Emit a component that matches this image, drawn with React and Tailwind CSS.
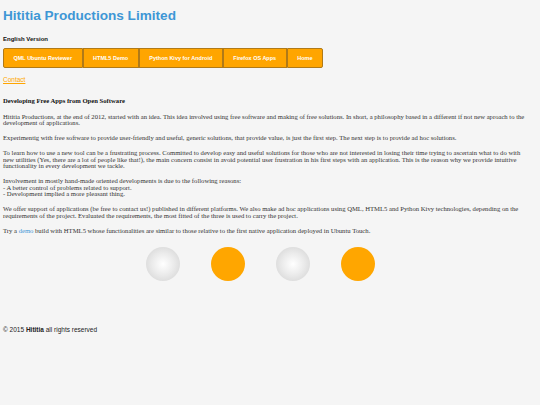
import React from "react";

const navItems = ["QML Ubuntu Reviewer", "HTML5 Demo", "Python Kivy for Android", "Firefox OS Apps", "Home"];

const App = () => {
    return (
        <div className="min-h-[405px] w-[540px] bg-[#f5f5f5] px-[3px] pt-[7px] text-[#222]">
            {/* Header */}
            <h1 className="font-['Liberation_Sans',Arial,sans-serif] text-[13.6px] font-bold leading-[18px] text-[#3e97d5]">
                Hititia Productions Limited
            </h1>
            <p className="mt-[10px] font-['Liberation_Sans',Arial,sans-serif] text-[6px] font-bold leading-[8px] text-[#111]">
                English Version
            </p>

            {/* Nav */}
            <nav className="mt-[5px] flex">
                {navItems.map((item) => (
                    <a
                        key={item}
                        href="#"
                        className="flex h-[20px] items-center border border-[#b07a18] bg-[#ffa500] px-[9.5px] font-['Liberation_Sans',Arial,sans-serif] text-[5.5px] font-bold text-white first:rounded-l-[2px] last:rounded-r-[2px]"
                    >
                        {item}
                    </a>
                ))}
            </nav>

            <a href="#" className="mt-[8px] block w-fit font-['Liberation_Sans',Arial,sans-serif] text-[6.5px] leading-[8px] text-[#ffa500] underline">
                Contact
            </a>

            {/* Content */}
            <div className="mt-[14px] w-[526px] font-['Liberation_Serif','Times_New_Roman',serif] text-[6.65px] leading-[6.5px] text-[#333]">
                <h2 className="text-[6.65px] font-bold text-[#111]">Developing Free Apps from Open Software</h2>
                <p className="mt-[9px]">
                    Hititia Productions, at the end of 2012, started with an idea. This idea involved using free software and making of free solutions. In short, a philosophy based in a different if not new aproach to the development of applications.
                </p>
                <p className="mt-[8.5px]">
                    Experimentig with free software to provide user-friendly and useful, generic solutions, that provide value, is just the first step. The next step is to provide ad hoc solutions.
                </p>
                <p className="mt-[8.5px]">
                    To learn how to use a new tool can be a frustrating process. Committed to develop easy and useful solutions for those who are not interested in losing their time trying to ascertain what to do with new utilities (Yes, there are a lot of people like that!), the main concern consist in avoid potential user frustration in his first steps with an application. This is the reason why we provide intuitive functionality in every development we tackle.
                </p>
                <p className="mt-[8.5px]">
                    Involvement in mostly hand-made oriented developments is due to the following reasons:
                    <br />- A better control of problems related to support.
                    <br />- Development implied a more pleasant thing.
                </p>
                <p className="mt-[8.5px]">
                    We offer support of applications (be free to contact us!) published in different platforms. We also make ad hoc applications using QML, HTML5 and Python Kivy technologies, depending on the requirements of the project. Evaluated the requirements, the most fitted of the three is used to carry the project.
                </p>
                <p className="mt-[8.5px]">
                    Try a <a href="#" className="text-[#3e97d5]">demo</a> build with HTML5 whose functionalities are similar to those relative to the first native application deployed in Ubuntu Touch.
                </p>
            </div>

            {/* Circles */}
            <div className="mt-[13px] flex justify-center gap-[31px] pr-[20px]">
                <div className="h-[34px] w-[34px] rounded-full bg-[radial-gradient(circle_at_50%_50%,#ffffff_0%,#ebebeb_45%,#cfcfcf_100%)]" />
                <div className="h-[34px] w-[34px] rounded-full bg-[#ffa600]" />
                <div className="h-[34px] w-[34px] rounded-full bg-[radial-gradient(circle_at_50%_50%,#ffffff_0%,#ebebeb_45%,#cfcfcf_100%)]" />
                <div className="h-[34px] w-[34px] rounded-full bg-[#ffa600]" />
            </div>

            {/* Footer */}
            <footer className="mt-[45px] font-['Liberation_Sans',Arial,sans-serif] text-[6.5px] leading-[8px] text-[#222]">
                © 2015 <b>Hititia</b> all rights reserved
            </footer>
        </div>
    );
};

export default App;
